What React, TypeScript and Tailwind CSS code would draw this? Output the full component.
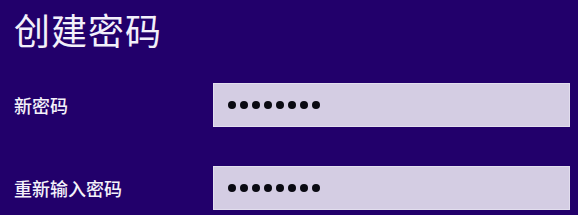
import React from "react";

function Dots() {
  return (
    <div className="flex gap-[4px] items-center">
      {Array.from({ length: 8 }).map((_, i) => (
        <span key={i} className="block w-[8px] h-[8px] rounded-full bg-[#0a0a12]" />
      ))}
    </div>
  );
}

function Row({ label }: { label: string }) {
  return (
    <div className="flex items-center">
      <div className="w-[199px] text-[18px] leading-none font-medium text-[#f4f2fa]">{label}</div>
      <div className="w-[357px] h-[44px] bg-[#d4cde3] border border-[#e2deee] flex items-center pl-[14px]">
        <Dots />
      </div>
    </div>
  );
}

export default function App() {
  return (
    <div
      className="w-[578px] h-[215px] bg-[#22006b] pl-[14px] overflow-hidden"
      style={{ fontFamily: '"Noto Sans CJK SC", "Noto Sans", sans-serif' }}
    >
      <div className="pt-[7px] text-[36px] leading-[44px] text-[#f2f0fa] tracking-[1px]">创建密码</div>
      <div className="mt-[32px] flex flex-col gap-[39px]">
        <Row label="新密码" />
        <Row label="重新输入密码" />
      </div>
    </div>
  );
}
